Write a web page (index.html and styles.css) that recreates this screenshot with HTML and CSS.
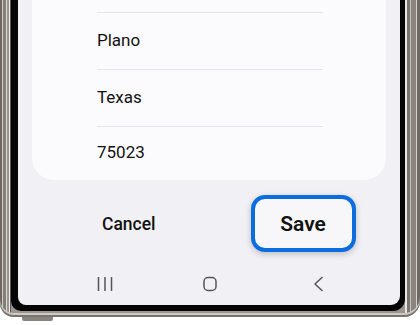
FILE: index.html
```html
<!doctype html>
<html lang="en">

<head>
  <meta charset="utf-8">
  <title>Edit address</title>
  <link rel="stylesheet" href="styles.css">
</head>

<body>
  <div class="device">
    <div class="bezel">
      <div class="screen">

        <div class="card">
          <div class="row">Plano</div>
          <div class="row">Texas</div>
          <div class="row last">75023</div>
        </div>

        <div class="actions">
          <span class="cancel">Cancel</span>
          <span class="save">Save</span>
        </div>

        <nav class="navbar">
          <span class="nav-item">
            <svg width="16" height="16" viewBox="0 0 16 16"><path d="M1.5 1v14M8 1v14M14.5 1v14" stroke="#555" stroke-width="1.5" fill="none"/></svg>
          </span>
          <span class="nav-item">
            <svg width="14" height="16" viewBox="0 0 14 16"><rect x="1" y="1.5" width="12" height="13" rx="4" stroke="#555" stroke-width="1.5" fill="none"/></svg>
          </span>
          <span class="nav-item back">
            <svg width="11" height="16" viewBox="0 0 11 16"><path d="M9.5 1 L2 8 L9.5 15" stroke="#555" stroke-width="1.5" fill="none" stroke-linejoin="round"/></svg>
          </span>
        </nav>

      </div>
    </div>
  </div>
  <div class="side-key"></div>
</body>

</html>
```

FILE: styles.css
```css
body { margin: 0; background: #fff; font-family: Roboto, "Liberation Sans", sans-serif; color: #111; }

.device {
  width: 420px; box-sizing: border-box; padding: 0 15px 6px 11px;
  border-radius: 0 0 16px 14px;
  background: linear-gradient(90deg, #6e6862 0 2px, #cfcac5 2px 3px, #857f79 3px 6px, #ddd9d5 6px 7px, #9a948e 7px 9px, #efedeb 9px 10px, #5a5550 10px 11px,
    #9c9690 11px 405px, #e8e5e2 405px 407px, #7a746e 407px 410px, #c9c4bf 410px 411px, #8a847e 411px 416px, #d6d2ce 416px 417px, #6f6964 417px);
  box-shadow: inset 0 -2px 0 #7a746f, inset 0 -4px 0 #cdc9c4;
}
.bezel { background: #050505; padding: 0 5px 6px 7px; border-radius: 0 0 12px 10px; }
.screen { height: 305px; background: #f1f1f5; border-radius: 0 0 9px 8px; overflow: hidden; }

.card { margin: 0 14px; height: 180px; box-sizing: border-box; padding: 12px 63px 0 65px; background: #fbfbfd; border-radius: 0 0 22px 22px; }
.row { height: 57px; box-sizing: border-box; padding-bottom: 3px; display: flex; align-items: center; font-size: 17px; border-top: 1px solid #e4e4e9; }
.row.last { height: 54px; }

.actions { display: flex; align-items: center; height: 57px; margin-top: 15px; padding-left: 84px; }
.cancel { font-size: 17.5px; font-weight: 500; }
.save {
  margin-left: 95px; width: 105px; height: 57px; box-sizing: border-box;
  display: flex; align-items: center; justify-content: center;
  border: 4px solid #0c6ddf; border-radius: 14px; background: #f7f7fa;
  box-shadow: 0 2px 6px rgba(0, 0, 0, .22);
  font-size: 21px; font-weight: 600;
}

.navbar { display: flex; height: 43px; margin-top: 10px; padding-left: 34px; align-items: center; }
.nav-item { width: 105px; display: flex; justify-content: center; }
.nav-item svg { display: block; }
.back { margin-left: 4px; }

.side-key { width: 31px; height: 4px; margin-left: 22px; background: #8a847e; border-radius: 0 0 2px 2px; }
```
